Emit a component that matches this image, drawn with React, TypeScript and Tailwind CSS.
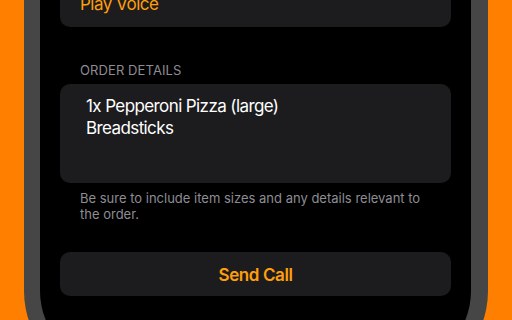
import React from 'react';

const App: React.FC = () => {
  return (
    <div className="h-[320px] w-[512px] overflow-hidden bg-[#ff7f00] pl-[24px] pr-[24px]" style={{ fontFamily: 'Inter, "Noto Sans", sans-serif' }}>
      <div className="h-[400px] rounded-b-[92px] border-l-[16px] border-r-[17px] border-b-[16px] border-[#464646] bg-black px-[20px]">
        <div className="mt-[-17px] flex h-[44px] items-center rounded-[10px] bg-[#1c1c1e] px-[20px]">
          <span className="text-[17px] tracking-[-0.5px] text-[#ff9f0a]">Play Voice</span>
        </div>

        <div className="mt-[35px] px-[20px] text-[13px] leading-[16px] tracking-[0.1px] text-[#8d8d93]">ORDER DETAILS</div>

        <div className="mt-[6px] h-[99px] rounded-[10px] bg-[#1c1c1e] pl-[26px] pr-[20px] pt-[11px] text-[17px] leading-[22px] tracking-[-0.6px] text-white">
          <div>1x Pepperoni Pizza (large)</div>
          <div>Breadsticks</div>
        </div>

        <p className="mt-[7px] px-[20px] text-[13px] leading-[16px] text-[#8d8d93]">
          Be sure to include item sizes and any details relevant to the order.
        </p>

        <button className="mt-[30px] flex h-[44px] w-full items-center justify-center rounded-[10px] bg-[#1c1c1e] pt-[3px] text-[17px] font-semibold tracking-[-0.4px] text-[#ff9f0a]">
          Send Call
        </button>
      </div>
    </div>
  );
};

export default App;
